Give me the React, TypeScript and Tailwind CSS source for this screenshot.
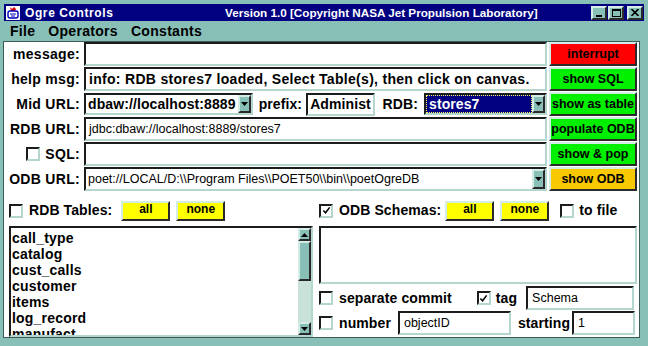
import React from 'react';

const inset =
  'bg-white border-2 border-t-[#1c1c1c] border-l-[#1c1c1c] border-b-[#b4d6ce] border-r-[#b4d6ce]';
const raised =
  'border-2 border-t-[#d4ece6] border-l-[#d4ece6] border-b-[#2a2a2a] border-r-[#2a2a2a]';

const tables = ['call_type', 'catalog', 'cust_calls', 'customer', 'items', 'log_record', 'manufact'];

function Btn({ label, color, small }: { label: string; color: string; small?: boolean }) {
  return (
    <div
      className={`${raised} ${color} flex items-center justify-center font-bold text-black leading-none ${
        small ? 'text-[12px] pb-[3px]' : 'text-[12.5px]'
      }`}
    >
      {label}
    </div>
  );
}

function Check({ checked }: { checked?: boolean }) {
  return (
    <div className={`${inset} w-[14px] h-[14px] shrink-0 flex items-center justify-center`}>
      {checked && (
        <svg width="9" height="9" viewBox="0 0 10 10">
          <path d="M1.5 5 L4 7.5 L8.5 1.5" stroke="#000" strokeWidth="1.7" fill="none" />
        </svg>
      )}
    </div>
  );
}

function Arrow() {
  return (
    <div className={`${raised} bg-[#88c0b8] w-[13px] shrink-0 flex items-center justify-center`}>
      <svg width="7" height="4" viewBox="0 0 7 4">
        <path d="M0 0 H7 L3.5 4 Z" fill="#000" />
      </svg>
    </div>
  );
}

function Label({
  children,
  className = '',
  tight,
}: {
  children: React.ReactNode;
  className?: string;
  tight?: boolean;
}) {
  return (
    <span
      className={`text-[14px] font-bold text-black whitespace-nowrap ${
        tight ? 'tracking-[0.1px]' : 'tracking-[0.3px]'
      } ${className}`}
    >
      {children}
    </span>
  );
}

export default function App() {
  return (
    <div className="w-[648px] h-[346px] bg-[#88c0b8] font-['Liberation_Sans',Arial,sans-serif] flex flex-col overflow-hidden select-none">
      {/* Title bar */}
      <div className="mt-[4px] mx-[4px] h-[17px] bg-[#000080] flex items-center text-white font-bold">
        <div className="ml-[1px] w-[16px] h-[16px] bg-white border border-[#000080] flex items-center justify-center">
          <svg width="14" height="14" viewBox="0 0 14 14">
            <path d="M4 1 L6 3 L8 1 L10 3 L9 5 L5 5 Z" fill="#e00000" />
            <rect x="2" y="5" width="10" height="7" rx="2" fill="none" stroke="#0000c0" strokeWidth="1.4" />
            <path d="M4 8 H10 M5 10 H9" stroke="#0000c0" strokeWidth="1.2" />
          </svg>
        </div>
        <span className="ml-[4px] w-[200px] text-[12px] tracking-[0.6px]">Ogre Controls</span>
        <span className="text-[11.7px]">Version 1.0 [Copyright NASA Jet Propulsion Laboratory]</span>
        <div className="ml-auto mr-[1px] flex gap-[1px]">
          <div className={`${raised} bg-[#88c0b8] w-[16px] h-[14px] flex items-end justify-center pb-[1px]`}>
            <div className="w-[6px] h-[2px] bg-black" />
          </div>
          <div className={`${raised} bg-[#88c0b8] w-[16px] h-[14px] flex items-center justify-center mr-[2px]`}>
            <div className="w-[9px] h-[8px] border border-black border-t-2" />
          </div>
          <div className={`${raised} bg-[#88c0b8] w-[16px] h-[14px] flex items-center justify-center`}>
            <svg width="8" height="7" viewBox="0 0 8 7">
              <path d="M0.5 0 L7.5 7 M7.5 0 L0.5 7" stroke="#000" strokeWidth="1.6" />
            </svg>
          </div>
        </div>
      </div>

      {/* Menu bar */}
      <div className="h-[20px] flex items-center gap-[13px] pl-[10px] text-[14px] font-bold text-black tracking-[0.3px]">
        <span>File</span>
        <span>Operators</span>
        <span>Constants</span>
      </div>

      {/* Content */}
      <div className="ml-[3px] w-[637px] h-[297px] bg-white border border-[#3c5a56] flex flex-col">
        <div className="grid grid-cols-[78px_463px_88px] grid-rows-[repeat(6,24px)] gap-x-[2px] gap-y-[1px]">
          <Label className="self-center text-right pr-[2px]">message:</Label>
          <div className={inset} />
          <Btn label="interrupt" color="bg-[#ff0000]" />

          <Label className="self-center text-right pr-[2px]">help msg:</Label>
          <div className={`${inset} flex items-center pl-[3px]`}>
            <Label>info: RDB stores7 loaded, Select Table(s), then click on canvas.</Label>
          </div>
          <Btn label="show SQL" color="bg-[#00f000]" />

          <Label className="self-center text-right pr-[2px]">Mid URL:</Label>
          <div className="flex items-center">
            <div className={`${inset} w-[170px] h-[22px] flex`}>
              <div className="flex-1 flex items-center pl-[2px] overflow-hidden">
                <Label tight>dbaw://localhost:8889</Label>
              </div>
              <Arrow />
            </div>
            <Label tight className="ml-[6px]">prefix:</Label>
            <div className={`${inset} ml-[4px] w-[69px] h-[23px] flex items-center pl-[2px] overflow-hidden`}>
              <Label tight>Administ</Label>
            </div>
            <Label tight className="ml-[8px]">RDB:</Label>
            <div className={`${inset} ml-[6px] w-[124px] h-[22px] flex`}>
              <div className="flex-1 flex items-center bg-[#000080] border border-dotted border-[#ffff60] pl-[2px]">
                <Label tight className="text-white">stores7</Label>
              </div>
              <Arrow />
            </div>
          </div>
          <Btn label="show as table" color="bg-[#00f000]" />

          <Label className="self-center text-right pr-[2px]">RDB URL:</Label>
          <div className={`${inset} flex items-center pl-[3px] text-[12.5px] text-black`}>
            jdbc:dbaw://localhost:8889/stores7
          </div>
          <Btn label="populate ODB" color="bg-[#00f000]" />

          <div className="flex items-center justify-end gap-[5px] pr-[2px]">
            <Check />
            <Label>SQL:</Label>
          </div>
          <div className={inset} />
          <Btn label="show & pop" color="bg-[#00f000]" />

          <Label className="self-center text-right pr-[2px]">ODB URL:</Label>
          <div className={`${inset} flex`}>
            <div className="flex-1 flex items-center pl-[2px] text-[12.5px] text-black whitespace-nowrap">
              poet://LOCAL/D:\\Program Files\\POET50\\bin\\poetOgreDB
            </div>
            <Arrow />
          </div>
          <Btn label="show ODB" color="bg-[#f8c800]" />
        </div>

        {/* Bottom section */}
        <div className="mt-[9px] flex gap-[6px] pl-[5px] flex-1 min-h-0">
          {/* RDB tables */}
          <div className="w-[304px] flex flex-col">
            <div className="h-[21px] flex items-center">
              <Check />
              <Label tight className="ml-[6px]">RDB Tables:</Label>
              <div className="ml-[9px] w-[49px] h-[20px] flex">
                <Btn label="all" color="bg-[#ffff00] flex-1" small />
              </div>
              <div className="ml-[6px] w-[49px] h-[20px] flex">
                <Btn label="none" color="bg-[#ffff00] flex-1" small />
              </div>
            </div>
            <div className={`${inset} mt-[5px] flex-1 flex overflow-hidden`}>
              <div className="flex-1 pl-[1px] pt-[2px] overflow-hidden">
                {tables.map((t) => (
                  <div key={t} className="text-[14px] font-bold leading-[16px] text-black tracking-[0.2px]">
                    {t}
                  </div>
                ))}
              </div>
              <div className="w-[13px] flex flex-col">
                <div className={`${raised} bg-[#88c0b8] h-[13px] flex items-center justify-center`}>
                  <svg width="7" height="4" viewBox="0 0 7 4">
                    <path d="M0 4 H7 L3.5 0 Z" fill="#000" />
                  </svg>
                </div>
                <div className={`${raised} bg-[#88c0b8] h-[40px]`} />
                <div className="flex-1 bg-[#c8e2da]" />
                <div className={`${raised} bg-[#88c0b8] h-[13px] flex items-center justify-center`}>
                  <svg width="7" height="4" viewBox="0 0 7 4">
                    <path d="M0 0 H7 L3.5 4 Z" fill="#000" />
                  </svg>
                </div>
              </div>
            </div>
          </div>

          {/* ODB schemas */}
          <div className="w-[318px] flex flex-col">
            <div className="h-[21px] flex items-center">
              <Check checked />
              <Label tight className="ml-[6px]">ODB Schemas:</Label>
              <div className="ml-[4px] w-[49px] h-[20px] flex">
                <Btn label="all" color="bg-[#ffff00] flex-1" small />
              </div>
              <div className="ml-[6px] w-[49px] h-[20px] flex">
                <Btn label="none" color="bg-[#ffff00] flex-1" small />
              </div>
              <div className="ml-[11px]">
                <Check />
              </div>
              <Label tight className="ml-[5px]">to file</Label>
            </div>
            <div className={`${inset} mt-[5px] h-[58px]`} />
            <div className="mt-[2px] h-[24px] flex items-center">
              <Check />
              <Label tight className="ml-[6px]">separate commit</Label>
              <div className="ml-[25px]">
                <Check checked />
              </div>
              <Label tight className="ml-[5px]">tag</Label>
              <div className={`${inset} ml-[9px] w-[108px] h-[24px] flex items-center pl-[4px] text-[12.5px] text-black`}>
                Schema
              </div>
            </div>
            <div className="mt-[1px] h-[24px] flex items-center">
              <Check />
              <Label tight className="ml-[6px]">number</Label>
              <div className={`${inset} ml-[7px] w-[113px] h-[24px] flex items-center pl-[4px] text-[12.5px] text-black`}>
                objectID
              </div>
              <Label tight className="ml-[7px]">starting</Label>
              <div className={`${inset} ml-[2px] w-[63px] h-[24px] flex items-center pl-[4px] text-[12.5px] text-black`}>
                1
              </div>
            </div>
          </div>
        </div>
      </div>
    </div>
  );
}
